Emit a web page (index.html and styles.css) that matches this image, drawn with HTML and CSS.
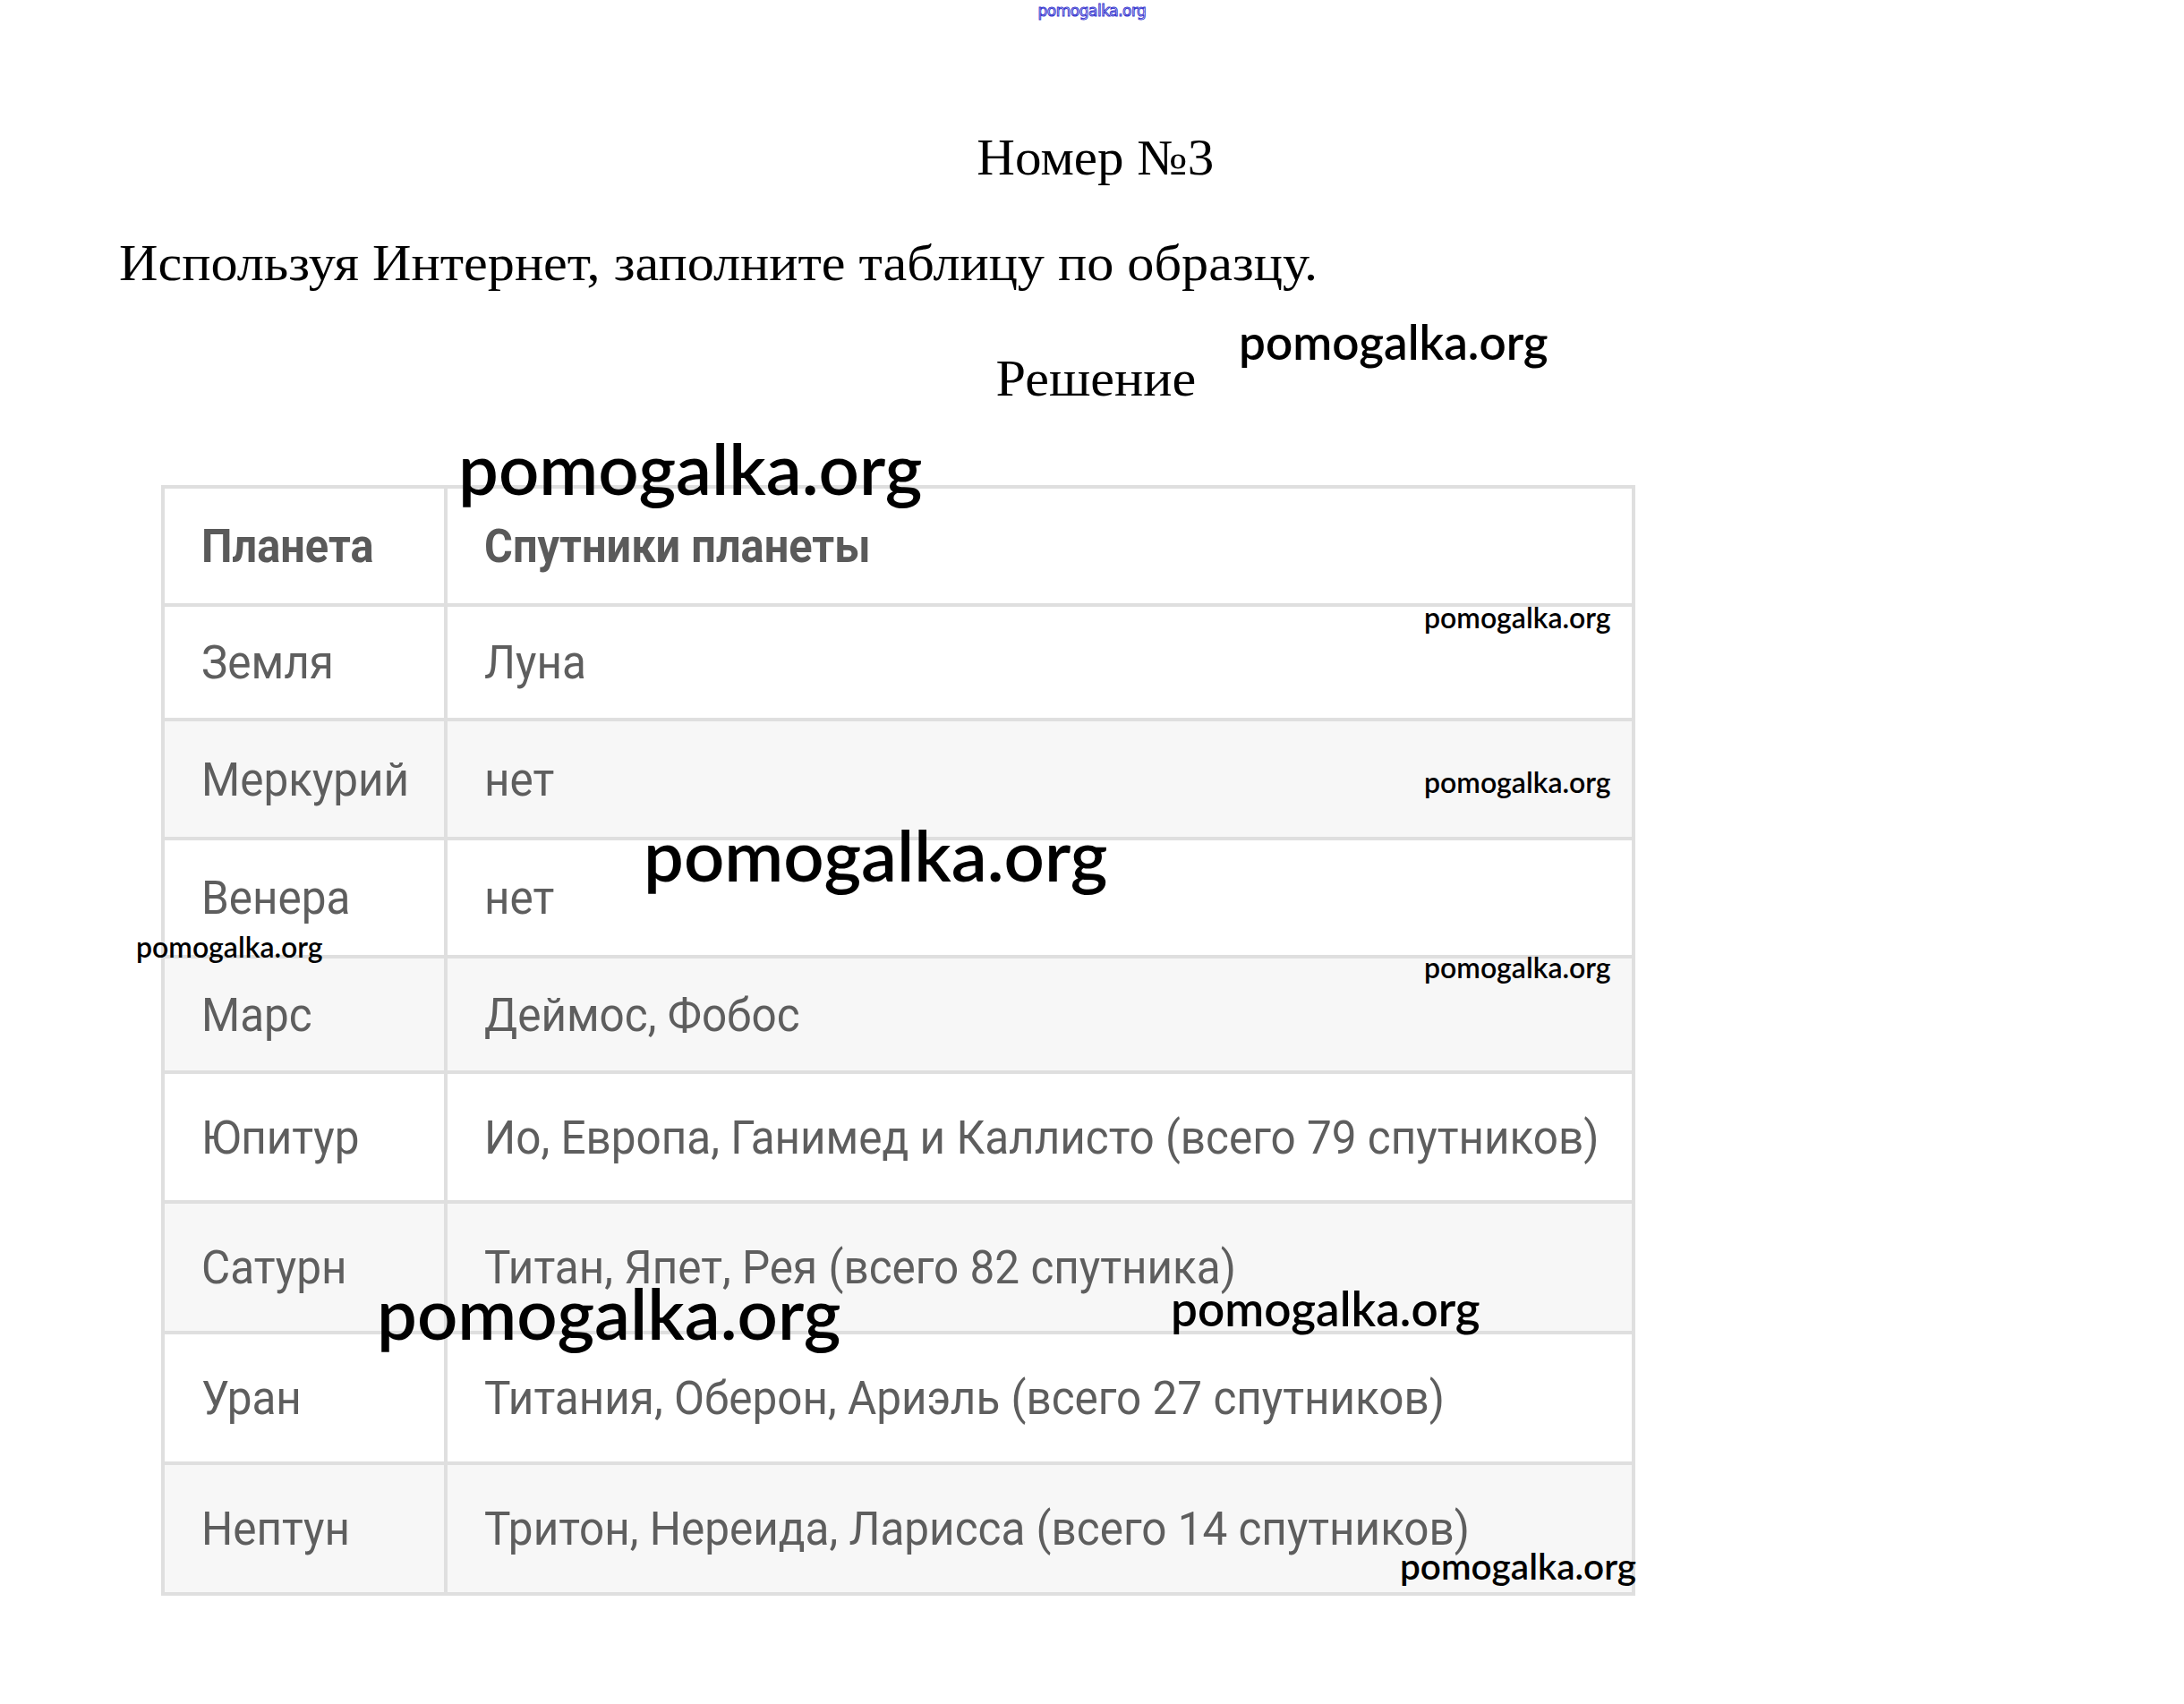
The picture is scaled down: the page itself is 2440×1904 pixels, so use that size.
FILE: index.html
```html
<!DOCTYPE html>
<html lang="ru">
<head>
<meta charset="utf-8">
<title>Номер №3</title>
<link rel="stylesheet" href="styles.css">
</head>
<body>
<div class="page">
  <div class="site-mark">pomogalka.org</div>
  <h1 class="title">Номер №3</h1>
  <p class="task">Используя Интернет, заполните таблицу по образцу.</p>
  <h2 class="solution">Решение</h2>
  <table class="planets">
    <tr class="row head">
      <th class="c1"><span class="t">Планета</span></th>
      <th class="c2"><span class="t">Спутники планеты</span></th>
    </tr>
    <tr class="row r1">
      <td class="c1"><span class="t">Земля</span></td>
      <td class="c2"><span class="t">Луна</span></td>
    </tr>
    <tr class="row r2 alt">
      <td class="c1"><span class="t">Меркурий</span></td>
      <td class="c2"><span class="t">нет</span></td>
    </tr>
    <tr class="row r3">
      <td class="c1"><span class="t">Венера</span></td>
      <td class="c2"><span class="t">нет</span></td>
    </tr>
    <tr class="row r4 alt">
      <td class="c1"><span class="t">Марс</span></td>
      <td class="c2"><span class="t">Деймос, Фобос</span></td>
    </tr>
    <tr class="row r5">
      <td class="c1"><span class="t">Юпитур</span></td>
      <td class="c2"><span class="t">Ио, Европа, Ганимед и Каллисто (всего 79 спутников)</span></td>
    </tr>
    <tr class="row r6 alt">
      <td class="c1"><span class="t">Сатурн</span></td>
      <td class="c2"><span class="t">Титан, Япет, Рея (всего 82 спутника)</span></td>
    </tr>
    <tr class="row r7">
      <td class="c1"><span class="t">Уран</span></td>
      <td class="c2"><span class="t">Титания, Оберон, Ариэль (всего 27 спутников)</span></td>
    </tr>
    <tr class="row r8 alt">
      <td class="c1"><span class="t">Нептун</span></td>
      <td class="c2"><span class="t">Тритон, Нереида, Ларисса (всего 14 спутников)</span></td>
    </tr>
  </table>

  <div class="wm big wm-b1">pomogalka.org</div>
  <div class="wm big wm-b2">pomogalka.org</div>
  <div class="wm big wm-b3">pomogalka.org</div>
  <div class="wm mid wm-m1">pomogalka.org</div>
  <div class="wm mid wm-m2">pomogalka.org</div>
  <div class="wm small wm-s1">pomogalka.org</div>
  <div class="wm small wm-s2">pomogalka.org</div>
  <div class="wm small wm-s3">pomogalka.org</div>
  <div class="wm small wm-s4">pomogalka.org</div>
  <div class="wm corner wm-c1">pomogalka.org</div>
</div>
</body>
</html>
```

FILE: styles.css
```css
html, body {
  margin: 0;
  padding: 0;
  background: #ffffff;
}

.page {
  position: relative;
  width: 2440px;
  min-height: 1904px;
  overflow: hidden;
  font-family: "Liberation Serif", "Times New Roman", serif;
  color: #000;
}

.site-mark {
  height: 24px;
  line-height: 24px;
  text-align: center;
  font-family: "DejaVu Sans", sans-serif;
  font-size: 17px;
  letter-spacing: -0.5px;
  color: rgba(255, 255, 255, 0.9);
  -webkit-text-stroke: 1px #3a3ad0;
}

.title,
.task,
.solution {
  font-family: "Liberation Serif", "Times New Roman", serif;
  font-weight: normal;
  font-size: 56px;
  line-height: 56px;
  margin: 0;
  width: fit-content;
  transform: scaleX(1.075);
}

.title {
  margin: 124px auto 0;
  padding-left: 8px;
  transform: scaleX(1.055);
  transform-origin: 50% 0;
}

.task {
  margin: 62px 0 0 133px;
  transform-origin: 0 0;
}

.solution {
  margin: 73px auto 0;
  padding-left: 8px;
  transform-origin: 50% 0;
}

.planets {
  margin-top: 91px;
  margin-left: 180px;
  width: 1647px;
  border-collapse: separate;
  border-spacing: 0;
  border-top: 4px solid #dfdfdf;
  border-left: 4px solid #dfdfdf;
  font-family: Roboto, "Noto Sans", sans-serif;
  color: #5e5e5e;
}

.planets th,
.planets td {
  border-right: 4px solid #dfdfdf;
  border-bottom: 4px solid #dfdfdf;
  padding: 0 0 0 41px;
  text-align: left;
  vertical-align: middle;
  font-size: 46px;
  font-weight: 400;
  white-space: nowrap;
  background: #ffffff;
}

.planets th {
  font-weight: 700;
  color: #5a5a5a;
}

.planets .alt td {
  background: #f7f7f7;
}

.c1 {
  width: 271px;
}

.t {
  display: inline-block;
  transform: scale(1.075, 1.12);
  transform-origin: 0 50%;
}

.planets th .t {
  transform: scale(1.06, 1.12);
}

.head { height: 132px; }
.r1 { height: 128px; }
.r2 { height: 133px; }
.r3 { height: 132px; }
.r4 { height: 129px; }
.r5 { height: 145px; }
.r6 { height: 146px; }
.r7 { height: 146px; }
.r8 { height: 146px; }

/* watermarks overlaying the page */
.wm {
  position: absolute;
  font-family: Lato, "Open Sans", sans-serif;
  font-weight: 600;
  line-height: 1;
  color: #000;
  white-space: nowrap;
}

.big { font-size: 79.5px; }
.mid { font-size: 53px; }
.small { font-size: 32px; }
.corner { font-size: 40.5px; }

.wm-b1 { left: 512px; top: 483px; }
.wm-b2 { left: 719px; top: 915px; }
.wm-b3 { left: 421px; top: 1427px; }
.wm-m1 { left: 1384px; top: 355px; }
.wm-m2 { left: 1308px; top: 1435px; }
.wm-s1 { left: 1591px; top: 674px; }
.wm-s2 { left: 1591px; top: 858px; }
.wm-s3 { left: 1591px; top: 1065px; }
.wm-s4 { left: 152px; top: 1042px; }
.wm-c1 { left: 1564px; top: 1730px; }
```
